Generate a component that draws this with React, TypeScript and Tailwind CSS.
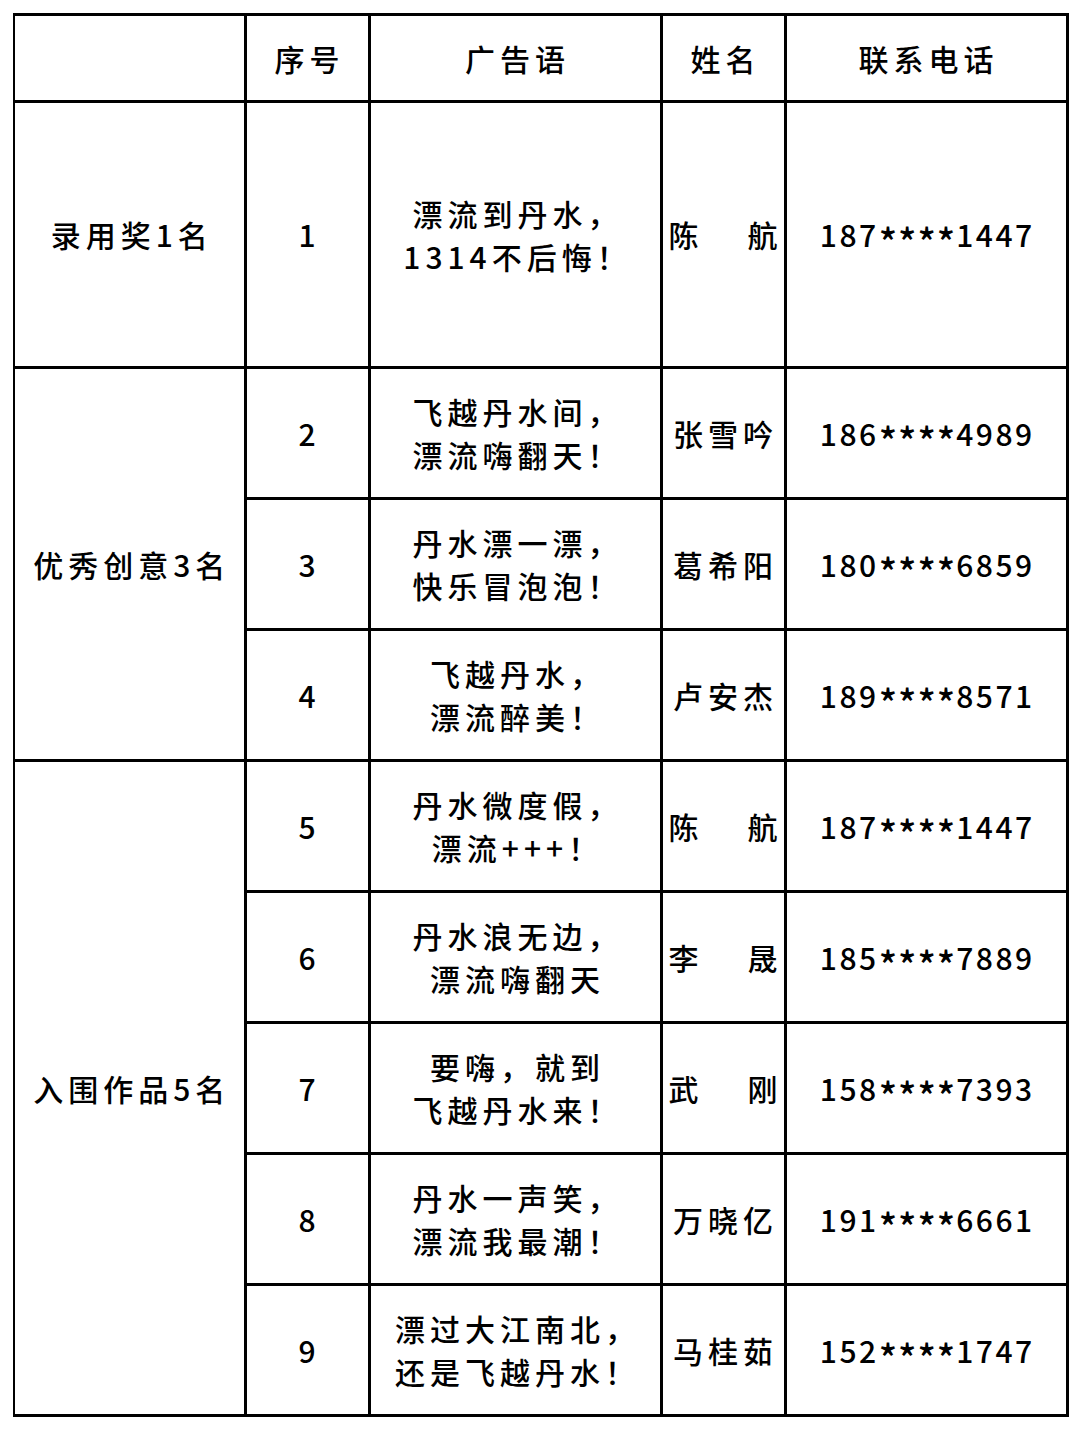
import React from 'react';

type Row = { no: string; slogan: [string, string]; name: string; phone: string };

const groups: { label: string; rows: Row[]; first?: boolean }[] = [
  {
    label: '录用奖1名',
    first: true,
    rows: [{ no: '1', slogan: ['漂流到丹水，', '1314不后悔！'], name: '陈航', phone: '187****1447' }],
  },
  {
    label: '优秀创意3名',
    rows: [
      { no: '2', slogan: ['飞越丹水间，', '漂流嗨翻天！'], name: '张雪吟', phone: '186****4989' },
      { no: '3', slogan: ['丹水漂一漂，', '快乐冒泡泡！'], name: '葛希阳', phone: '180****6859' },
      { no: '4', slogan: ['飞越丹水，', '漂流醉美！'], name: '卢安杰', phone: '189****8571' },
    ],
  },
  {
    label: '入围作品5名',
    rows: [
      { no: '5', slogan: ['丹水微度假，', '漂流+++！'], name: '陈航', phone: '187****1447' },
      { no: '6', slogan: ['丹水浪无边，', '漂流嗨翻天'], name: '李晟', phone: '185****7889' },
      { no: '7', slogan: ['要嗨，就到', '飞越丹水来！'], name: '武刚', phone: '158****7393' },
      { no: '8', slogan: ['丹水一声笑，', '漂流我最潮！'], name: '万晓亿', phone: '191****6661' },
      { no: '9', slogan: ['漂过大江南北，', '还是飞越丹水！'], name: '马桂茹', phone: '152****1747' },
    ],
  },
];

const cell = 'border-[3px] border-black text-center align-middle p-0 leading-[43px]';

function Name({ name }: { name: string }) {
  if (name.length === 2) {
    return (
      <div className="flex justify-between px-[6px]">
        <span>{name[0]}</span>
        <span>{name[1]}</span>
      </div>
    );
  }
  return <span className="tracking-[5px] pl-[5px]">{name}</span>;
}

function Phone({ phone }: { phone: string }) {
  const [head, tail] = phone.split('****');
  return (
    <span className="tracking-[2.5px] pl-[2.5px]">
      {head}
      <span className="text-[38px] align-[-10px] leading-none tracking-[1px]">****</span>
      {tail}
    </span>
  );
}

export default function App() {
  return (
    <div
      className="w-[1080px] h-[1430px] bg-white pt-[13px] pl-[13px] text-black text-[30px] font-medium"
      style={{ fontFamily: '"Noto Sans CJK SC", "Liberation Sans", sans-serif' }}
    >
      <table className="border-collapse table-fixed w-[1053px] border-l-2 border-black">
        <colgroup>
          <col className="w-[231px]" />
          <col className="w-[124px]" />
          <col className="w-[292px]" />
          <col className="w-[124px]" />
          <col className="w-[282px]" />
        </colgroup>
        <thead>
          <tr className="h-[87px]">
            <th className={`${cell} border-l-2 font-medium`}></th>
            <th className={`${cell} font-medium tracking-[5px] pl-[5px]`}>序号</th>
            <th className={`${cell} font-medium tracking-[5px] pl-[5px]`}>广告语</th>
            <th className={`${cell} font-medium tracking-[5px] pl-[5px]`}>姓名</th>
            <th className={`${cell} font-medium tracking-[5px] pl-[5px]`}>联系电话</th>
          </tr>
        </thead>
        <tbody>
          {groups.map((g) =>
            g.rows.map((r, i) => (
              <tr key={r.no} className={g.first ? 'h-[266px]' : 'h-[131px]'}>
                {i === 0 && (
                  <td rowSpan={g.rows.length} className={`${cell} border-l-2 tracking-[5px] pl-[5px]`}>
                    {g.label}
                  </td>
                )}
                <td className={cell}>{r.no}</td>
                <td className={`${cell} tracking-[5px] pl-[5px]`}>
                  <div>{r.slogan[0]}</div>
                  <div>{r.slogan[1]}</div>
                </td>
                <td className={cell}>
                  <Name name={r.name} />
                </td>
                <td className={`${cell} pt-[4px]`}>
                  <Phone phone={r.phone} />
                </td>
              </tr>
            ))
          )}
        </tbody>
      </table>
    </div>
  );
}
